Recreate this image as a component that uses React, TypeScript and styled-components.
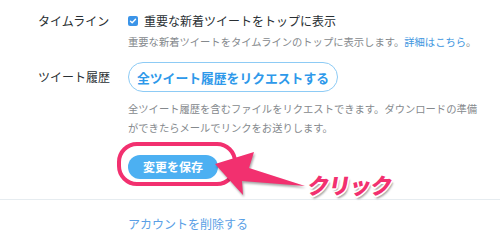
import React from "react"
import styled, { createGlobalStyle } from "styled-components"

const GlobalStyle = createGlobalStyle`
  html, body {
    margin: 0;
    padding: 0;
    background: #ffffff;
  }

  body {
    font-family: "Noto Sans CJK JP", "Noto Sans", sans-serif;
    color: #292f33;
  }
`

const Page = styled.div`
  width: 500px;
  height: 248px;
  overflow: hidden;
  padding-top: 12px;
  box-sizing: border-box;
`

const Settings = styled.div`
  display: grid;
  grid-template-columns: 90px 1fr;
  row-gap: 11px;
  padding-left: 38px;
`

const Label = styled.div<{ $lh: number }>`
  font-size: 12px;
  line-height: ${(p) => p.$lh}px;
  color: #292f33;
  white-space: nowrap;
`

const Field = styled.div`
  display: flex;
  flex-direction: column;
  align-items: flex-start;
`

const CheckRow = styled.label`
  display: flex;
  align-items: center;
  gap: 6px;
  font-size: 12px;
  line-height: 18px;
  color: #292f33;
`

const CheckBox = styled.span`
  width: 10px;
  height: 10px;
  border-radius: 2px;
  background: #3b94e8;
  display: flex;
  align-items: center;
  justify-content: center;
`

const Hint = styled.p<{ $top: number }>`
  margin: ${(p) => p.$top}px 0 0;
  font-size: 10.3px;
  line-height: 19px;
  color: #85898d;
  width: 352px;
`

const HintLink = styled.a`
  color: #3d96e0;
  text-decoration: none;
`

const OutlineButton = styled.button`
  height: 30px;
  width: 210px;
  box-sizing: border-box;
  border: 1px solid #8dcbf5;
  border-radius: 15px;
  background: #ffffff;
  color: #2e99ea;
  font-family: inherit;
  font-size: 12.8px;
  font-weight: 700;
  padding: 0;
  text-align: center;
`

const SaveArea = styled.div`
  position: relative;
  margin: 16px 0 0 128px;
  width: 90px;
  height: 24px;
`

const SaveButton = styled.button`
  width: 90px;
  height: 24px;
  border: none;
  border-radius: 12px;
  background: #4cb0f2;
  color: #ffffff;
  font-family: inherit;
  font-size: 12px;
  font-weight: 700;
  padding: 0;
`

const Highlight = styled.div`
  position: absolute;
  left: -11px;
  top: -11px;
  width: 120px;
  height: 44px;
  box-sizing: border-box;
  border: 4.5px solid #f2306f;
  border-radius: 20px;
  pointer-events: none;
`

const Arrow = styled.svg`
  position: absolute;
  left: 82px;
  top: -8px;
  overflow: visible;
  filter: drop-shadow(1px 2px 1.2px rgba(0, 0, 0, 0.35));
`

const Callout = styled.span`
  position: absolute;
  left: 180px;
  top: 19px;
  font-size: 22px;
  line-height: 24px;
  font-weight: 900;
  color: #f2306f;
  white-space: nowrap;
  letter-spacing: -1px;
  transform: skewX(-10deg);
  text-shadow:
    1.5px 0 0 #fff, -1.5px 0 0 #fff, 0 1.5px 0 #fff, 0 -1.5px 0 #fff,
    1px 1px 0 #fff, -1px -1px 0 #fff, 1px -1px 0 #fff, -1px 1px 0 #fff,
    2px 3px 2px rgba(0, 0, 0, 0.35);
`

const Divider = styled.hr`
  margin: 22px 0 0;
  border: none;
  border-top: 1px solid #e6ecf0;
`

const DangerLink = styled.a`
  display: block;
  margin: 15px 0 0 128px;
  font-size: 12px;
  line-height: 18px;
  color: #5a9fe6;
  text-decoration: none;
`

const App = () => {
  return (
    <Page>
      <GlobalStyle />
      <Settings>
        <Label $lh={18}>タイムライン</Label>
        <Field>
          <CheckRow>
            <CheckBox>
              <svg width="8" height="8" viewBox="0 0 8 8">
                <path d="M1.5 4.2 L3.2 5.8 L6.5 2.2" fill="none" stroke="#fff" strokeWidth="1.4" strokeLinecap="round" strokeLinejoin="round" />
              </svg>
            </CheckBox>
            重要な新着ツイートをトップに表示
          </CheckRow>
          <Hint $top={2}>
            重要な新着ツイートをタイムラインのトップに表示します。<HintLink href="#">詳細はこちら</HintLink>。
          </Hint>
        </Field>

        <Label $lh={30}>ツイート履歴</Label>
        <Field>
          <OutlineButton>全ツイート履歴をリクエストする</OutlineButton>
          <Hint $top={7}>
            全ツイート履歴を含むファイルをリクエストできます。ダウンロードの準備ができたらメールでリンクをお送りします。
          </Hint>
        </Field>
      </Settings>

      <SaveArea>
        <SaveButton>変更を保存</SaveButton>
        <Highlight />
        <Arrow width="100" height="55" viewBox="0 0 100 55">
          <polygon points="5,19 44,7 39,23 95,41 32,36 33,50" fill="#f2306f" />
        </Arrow>
        <Callout>クリック</Callout>
      </SaveArea>

      <Divider />
      <DangerLink href="#">アカウントを削除する</DangerLink>
    </Page>
  )
}

export default App
